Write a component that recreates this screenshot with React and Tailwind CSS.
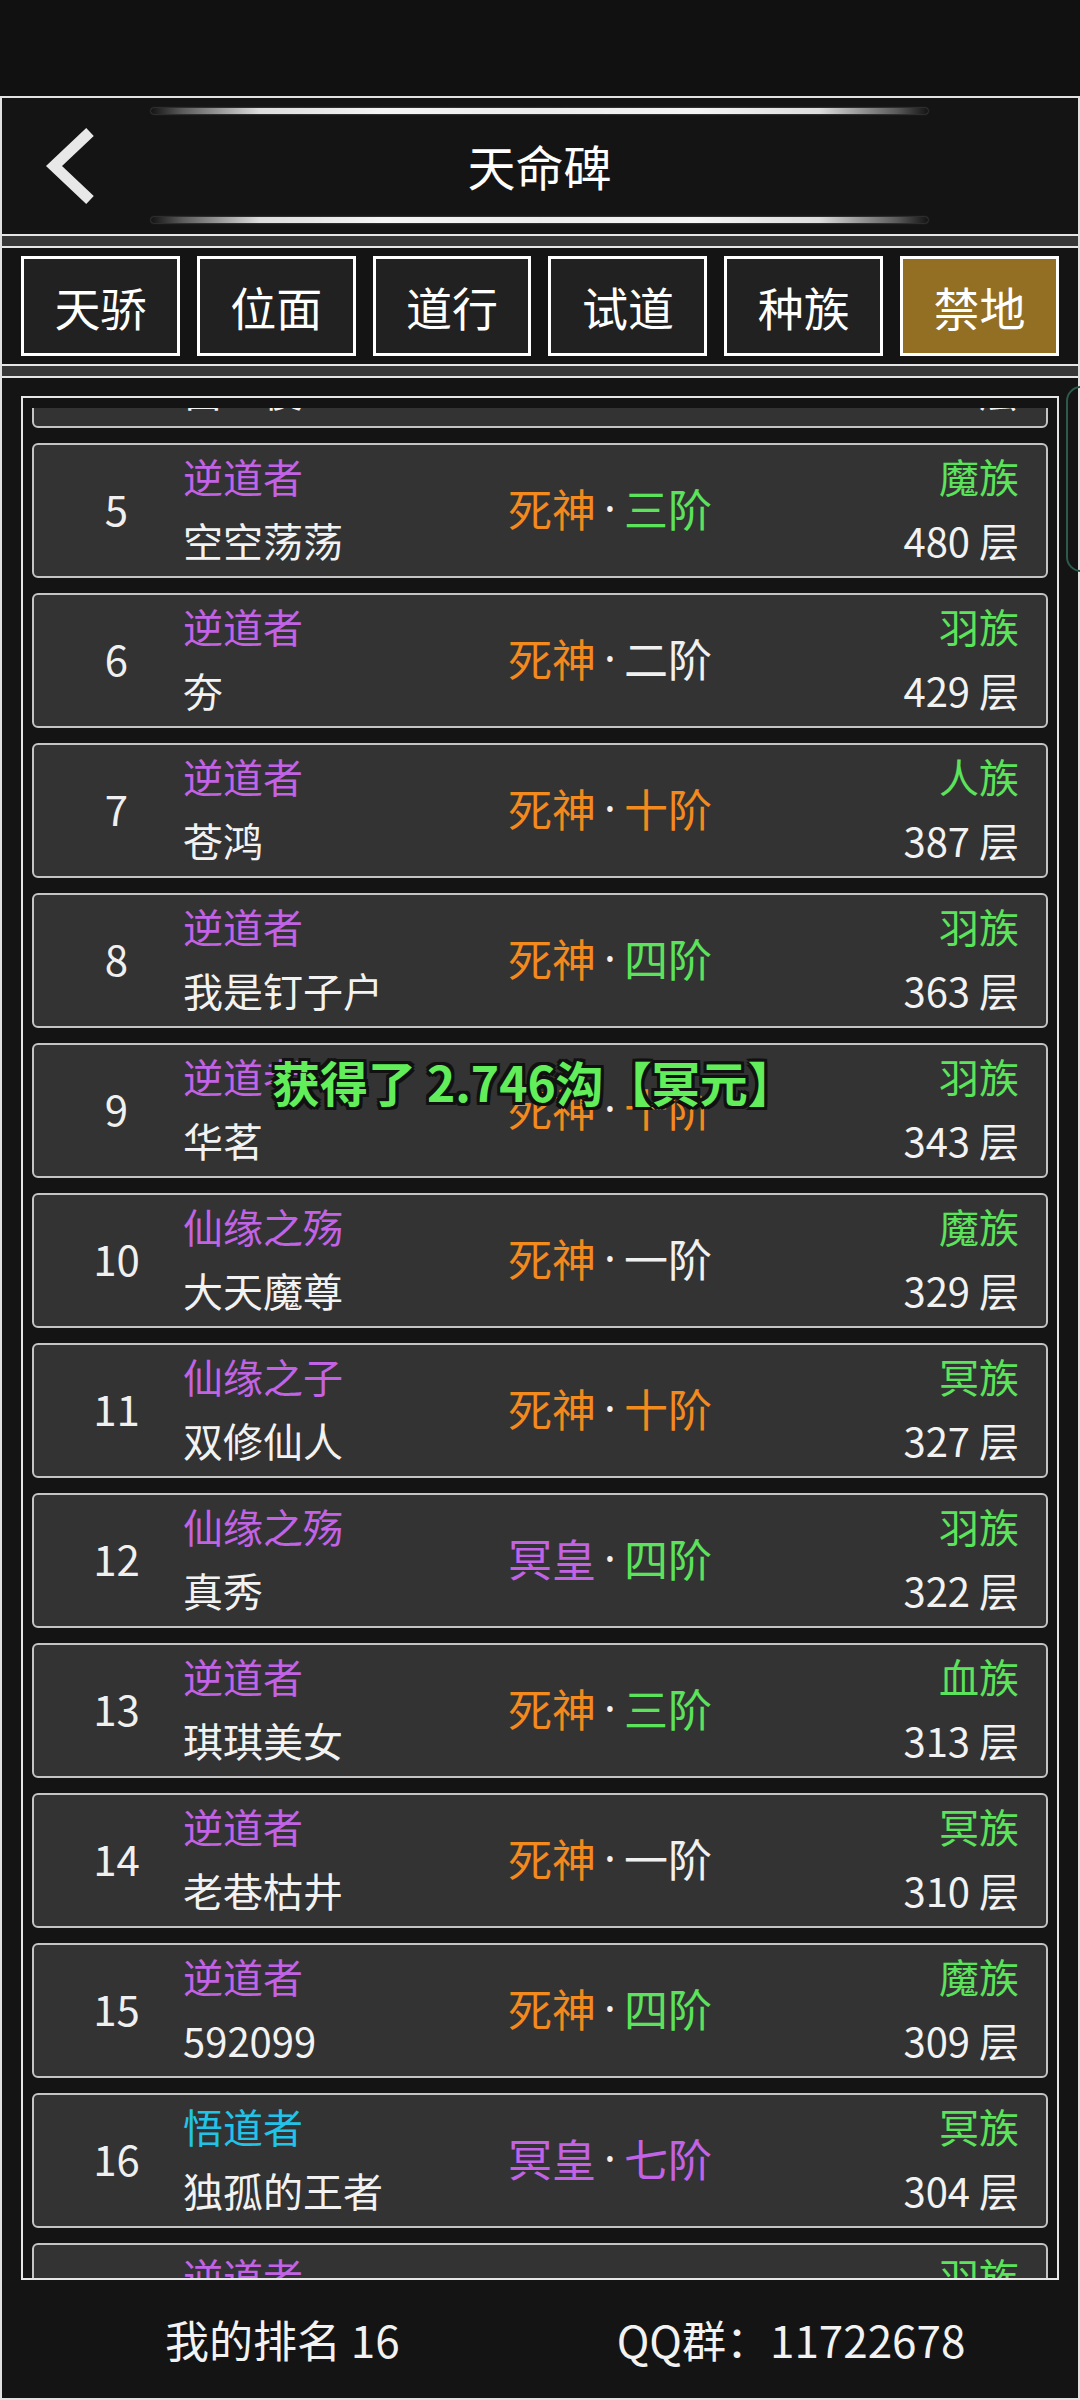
import React from "react";

const P = "text-[#c263e6]";
const O = "text-[#f28a1e]";
const G = "text-[#5ce35c]";
const W = "text-[#f0f0f0]";
const C = "text-[#22c3e8]";

const rows = [
  { rank: 4, title: "逆道者", tc: P, name: "吕三俊", a: "死神", ac: O, b: "三阶", bc: G, race: "羽族", floor: "498 层" },
  { rank: 5, title: "逆道者", tc: P, name: "空空荡荡", a: "死神", ac: O, b: "三阶", bc: G, race: "魔族", floor: "480 层" },
  { rank: 6, title: "逆道者", tc: P, name: "夯", a: "死神", ac: O, b: "二阶", bc: W, race: "羽族", floor: "429 层" },
  { rank: 7, title: "逆道者", tc: P, name: "苍鸿", a: "死神", ac: O, b: "十阶", bc: O, race: "人族", floor: "387 层" },
  { rank: 8, title: "逆道者", tc: P, name: "我是钉子户", a: "死神", ac: O, b: "四阶", bc: G, race: "羽族", floor: "363 层" },
  { rank: 9, title: "逆道者", tc: P, name: "华茗", a: "死神", ac: O, b: "十阶", bc: O, race: "羽族", floor: "343 层" },
  { rank: 10, title: "仙缘之殇", tc: P, name: "大天魔尊", a: "死神", ac: O, b: "一阶", bc: W, race: "魔族", floor: "329 层" },
  { rank: 11, title: "仙缘之子", tc: P, name: "双修仙人", a: "死神", ac: O, b: "十阶", bc: O, race: "冥族", floor: "327 层" },
  { rank: 12, title: "仙缘之殇", tc: P, name: "真秀", a: "冥皇", ac: P, b: "四阶", bc: G, race: "羽族", floor: "322 层" },
  { rank: 13, title: "逆道者", tc: P, name: "琪琪美女", a: "死神", ac: O, b: "三阶", bc: G, race: "血族", floor: "313 层" },
  { rank: 14, title: "逆道者", tc: P, name: "老巷枯井", a: "死神", ac: O, b: "一阶", bc: W, race: "冥族", floor: "310 层" },
  { rank: 15, title: "逆道者", tc: P, name: "592099", a: "死神", ac: O, b: "四阶", bc: G, race: "魔族", floor: "309 层" },
  { rank: 16, title: "悟道者", tc: C, name: "独孤的王者", a: "冥皇", ac: P, b: "七阶", bc: P, race: "冥族", floor: "304 层" },
  { rank: 17, title: "逆道者", tc: P, name: "风清扬", a: "死神", ac: O, b: "二阶", bc: W, race: "羽族", floor: "301 层" },
];

const tabs = ["天骄", "位面", "道行", "试道", "种族", "禁地"];

function Separator() {
  return (
    <div className="flex flex-col">
      <div className="h-[2px] bg-[#e6e6e6]" />
      <div className="h-[10px] bg-[#383838]" />
      <div className="h-[2px] bg-[#e6e6e6]" />
    </div>
  );
}

function GlowLine() {
  return (
    <div className="h-[6px] w-full rounded-full bg-[linear-gradient(90deg,rgba(90,90,90,0)_0%,#5a5a5a_4%,#dcdcdc_14%,#f4f4f4_30%,#ececec_50%,#f4f4f4_70%,#dcdcdc_86%,#5a5a5a_96%,rgba(90,90,90,0)_100%)] shadow-[0_0_2px_#777]" />
  );
}

function Row({ r }) {
  return (
    <div className="h-[135px] shrink-0 flex items-center pb-[6px] rounded-[6px] border-2 border-[#c4c4c4] bg-[#333333]">
      <div className="w-[149px] pl-[16px] text-center text-[42px] leading-none text-[#f0f0f0]">{r.rank}</div>
      <div className="w-[277px] flex flex-col text-[40px] leading-[64px]">
        <div className={r.tc}>{r.title}</div>
        <div className="text-[#f2f2f2] whitespace-nowrap">{r.name}</div>
      </div>
      <div className="w-[300px] flex items-center justify-center text-[44px] leading-none whitespace-nowrap">
        <span className={r.ac}>{r.a}</span>
        <span className="inline-block w-[28px] text-center font-['Noto_Sans',sans-serif] text-[#f0f0f0]">·</span>
        <span className={r.bc}>{r.b}</span>
      </div>
      <div className="flex-1 pr-[27px] flex flex-col items-end text-[40px] leading-[64px]">
        <div className="text-[#5ce35c]">{r.race}</div>
        <div className="text-[#f2f2f2]">{r.floor}</div>
      </div>
    </div>
  );
}

export default function App() {
  return (
    <div className="relative w-[1080px] h-[2400px] overflow-hidden bg-[#111111] flex flex-col font-['Noto_Sans_CJK_SC','Noto_Sans',sans-serif]">
      <div className="h-[96px] shrink-0 bg-[#111111]" />
      <div className="flex-1 flex flex-col border-2 border-[#e2e2e2] bg-[#141414]">
        {/* header */}
        <div className="h-[136px] shrink-0 grid grid-cols-[149px_777px_1fr]">
          <div className="flex items-center">
            <svg className="ml-[38px]" width="60" height="80" viewBox="0 0 60 80">
              <polyline points="50,6 14,40 50,74" fill="none" stroke="#e8e8e8" strokeWidth="11" strokeLinejoin="miter" strokeLinecap="butt" />
            </svg>
          </div>
          <div className="flex flex-col pt-[10px] pb-[11px]">
            <GlowLine />
            <div className="flex-1 flex items-center justify-center pb-[2px] text-[48px] leading-none text-white">天命碑</div>
            <GlowLine />
          </div>
          <div />
        </div>
        <Separator />
        {/* tabs */}
        <div className="h-[116px] shrink-0 pt-[8px] px-[19px] grid grid-cols-6 gap-[17px]">
          {tabs.map((t, i) => (
            <div
              key={t}
              className={
                i === 5
                  ? "h-[100px] border-[3px] border-white bg-[#926f22] flex items-center justify-center text-[46px] leading-none text-white"
                  : "h-[100px] border-[3px] border-white bg-[#212121] flex items-center justify-center text-[46px] leading-none text-white"
              }
            >
              {t}
            </div>
          ))}
        </div>
        <Separator />
        {/* list panel */}
        <div className="flex-1 flex flex-col">
          <div className="mt-[18px] mx-[19px] h-[1884px] shrink-0 border-2 border-[#e6e6e6] pt-[10px]">
            <div className="h-[1870px] overflow-hidden px-[9px]">
              <div className="mt-[-115px] flex flex-col gap-[15px]">
                {rows.map((r) => (
                  <Row key={r.rank} r={r} />
                ))}
              </div>
            </div>
          </div>
          <div className="flex-1 flex items-center pl-[163px] gap-[217px] text-[44px] leading-none text-[#f2f2f2] whitespace-nowrap">
            <span>我的排名 16</span>
            <span>QQ群：11722678</span>
          </div>
        </div>
      </div>

      {/* scrollbar thumb */}
      <div className="absolute left-[1066px] top-[386px] w-[30px] h-[186px] rounded-[16px] border-2 border-[#2d5b4b]" />

      {/* toast */}
      <div className="absolute left-[272px] top-[1056px] text-[48px] leading-[50px] font-bold text-[#62ee5a] whitespace-nowrap [text-shadow:-3px_-3px_0_#111,3px_-3px_0_#111,-3px_3px_0_#111,3px_3px_0_#111,0_3px_0_#111,0_-3px_0_#111,3px_0_0_#111,-3px_0_0_#111]">
        获得了 2.746沟【冥元】
      </div>
    </div>
  );
}
